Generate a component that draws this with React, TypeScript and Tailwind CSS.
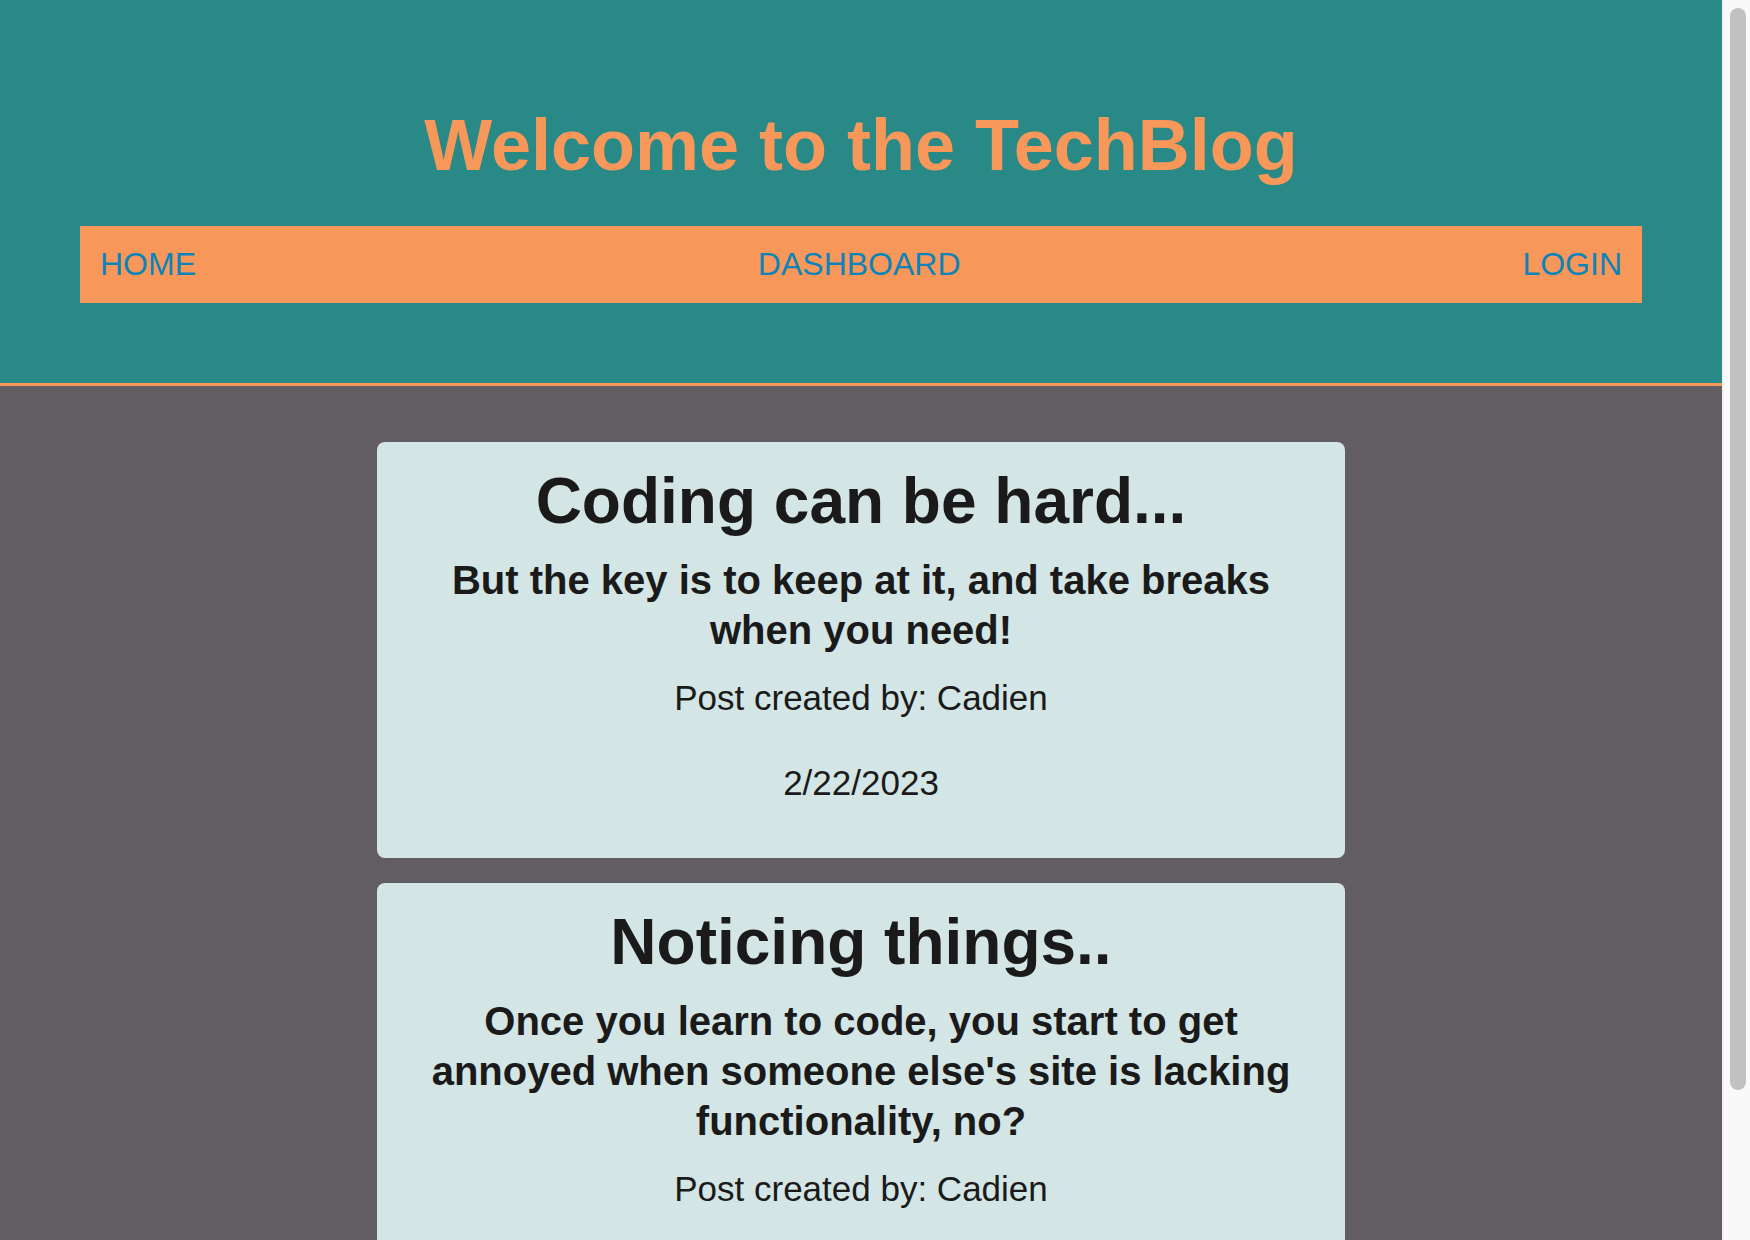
import React from "react";

const posts = [
  {
    title: "Coding can be hard...",
    body: "But the key is to keep at it, and take breaks when you need!",
    author: "Cadien",
    date: "2/22/2023",
  },
  {
    title: "Noticing things..",
    body: "Once you learn to code, you start to get annoyed when someone else's site is lacking functionality, no?",
    author: "Cadien",
    date: "2/22/2023",
  },
];

export default function App() {
  return (
    <div className="h-screen flex overflow-hidden font-['Liberation_Sans',Arial,Helvetica,sans-serif]">
      <div className="flex-1 min-w-0 h-full overflow-hidden bg-[#625d63]">
        <header className="bg-[#298986] border-b-[3px] border-[#f79759] pt-[105px] pb-[80px] px-[80px]">
          <h1 className="text-center text-[72px] leading-[80px] font-bold text-[#f79759]">
            Welcome to the TechBlog
          </h1>
          <nav className="mt-[41px] h-[77px] bg-[#f79759] px-5 flex items-center justify-between text-[32px] leading-[37px] text-[#0c84ba]">
            <a href="#">HOME</a>
            <a href="#">DASHBOARD</a>
            <a href="#">LOGIN</a>
          </nav>
        </header>
        <main className="pt-[56px] pb-[56px] flex flex-col items-center gap-[25px]">
          {posts.map((p, i) => (
            <article
              key={i}
              className="w-[968px] bg-[#d3e5e4] rounded-[8px] px-[40px] pt-[23px] pb-[55px] text-center text-[#1a1a1a]"
            >
              <h2 className="text-[64px] leading-[72px] font-bold">{p.title}</h2>
              <h3 className="mt-[18px] text-[40px] leading-[50px] font-bold">{p.body}</h3>
              <p className="mt-[23px] text-[35px] leading-[40px]">Post created by: {p.author}</p>
              <p className="mt-[45px] text-[35px] leading-[40px]">{p.date}</p>
            </article>
          ))}
        </main>
      </div>
      <div className="w-[28px] shrink-0 h-full bg-[#f9f9f9] border-l-[2px] border-[#f1f1f1] pl-[6px] pr-[4px] pt-[8px]">
        <div className="h-[1082px] w-full rounded-full bg-[#c1c1c1]" />
      </div>
    </div>
  );
}
